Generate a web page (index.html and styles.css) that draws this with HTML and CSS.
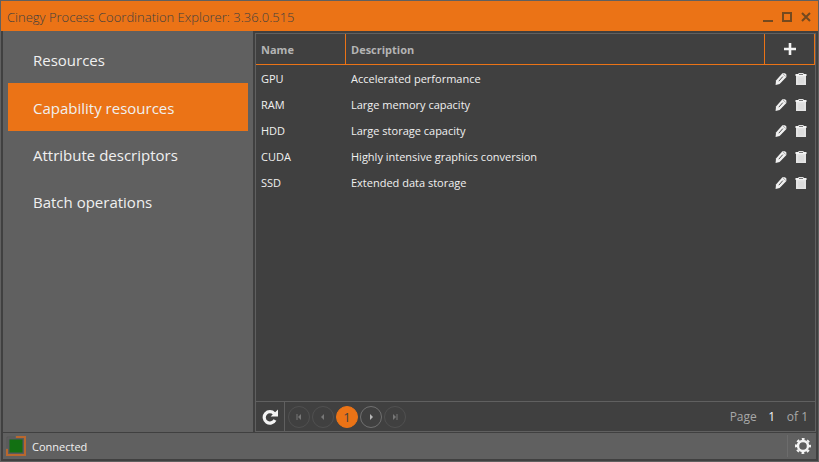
FILE: index.html
```html
<!DOCTYPE html>
<html lang="en">
<head>
    <meta charset="UTF-8">
    <meta name="viewport" content="width=device-width, initial-scale=1.0">
    <title>Cinegy Process Coordination Explorer</title>
    <link rel="stylesheet" href="styles.css">
</head>
<body>
    <svg class="sprite" aria-hidden="true">
        <symbol id="icon-edit" viewBox="0 0 12 14">
            <path d="M7.4 1.2 H10 L11.4 2.6 V5 L4.6 12 L0.6 13 L1 8.4 Z" fill="#f0f0f0"/>
            <path d="M7.8 4.6 L3.8 9.2" stroke="#505050" stroke-width="1"/>
            <path d="M8 1.8 L10.8 4.6" stroke="#808080" stroke-width="0.7"/>
        </symbol>
        <symbol id="icon-delete" viewBox="0 0 12 14">
            <path d="M3.5 1 H8.5 V2 H11.5 V4 H0.5 V2 H3.5 Z" fill="#f4f4f4"/>
            <path d="M4 2.4 H8" stroke="#404040" stroke-width="0.8"/>
            <path d="M1 4 H11 V13 H1 Z" fill="#e4e4e4"/>
            <path d="M4 5.5 V11.5 M6 5.5 V11.5 M8 5.5 V11.5" stroke="#d0d0d0" stroke-width="0.8"/>
        </symbol>
    </svg>

    <div class="window">
        <header class="titlebar">
            <h1>Cinegy Process Coordination Explorer: 3.36.0.515</h1>
            <div class="window-buttons">
                <button type="button" aria-label="Minimize">
                    <svg width="10" height="10" viewBox="0 0 10 10"><path d="M0 9 H10" stroke="#74491f" stroke-width="2"/></svg>
                </button>
                <button type="button" aria-label="Maximize">
                    <svg width="10" height="10" viewBox="0 0 10 10"><path d="M1 1 H9 V9 H1 Z" fill="none" stroke="#74491f" stroke-width="2"/></svg>
                </button>
                <button type="button" aria-label="Close">
                    <svg width="10" height="10" viewBox="0 0 10 10"><path d="M1 1 L9 9 M9 1 L1 9" stroke="#74491f" stroke-width="2"/></svg>
                </button>
            </div>
        </header>

        <div class="content">
            <nav class="sidebar">
                <a href="#resources">Resources</a>
                <a href="#capability" class="active">Capability resources</a>
                <a href="#attributes">Attribute descriptors</a>
                <a href="#batch">Batch operations</a>
            </nav>

            <main class="panel">
                <div class="table-area">
                    <table>
                        <thead>
                            <tr>
                                <th class="col-name">Name</th>
                                <th>Description</th>
                                <th class="col-actions">
                                    <button type="button" aria-label="Add">
                                        <svg width="12" height="12" viewBox="0 0 12 12"><path d="M6 0 V12 M0 6 H12" stroke="#f4f4f4" stroke-width="2.6"/></svg>
                                    </button>
                                </th>
                            </tr>
                        </thead>
                        <tbody>
                            <tr>
                                <td>GPU</td>
                                <td>Accelerated performance</td>
                                <td class="actions">
                                    <button type="button" aria-label="Edit GPU"><svg><use href="#icon-edit"/></svg></button>
                                    <button type="button" aria-label="Delete GPU"><svg><use href="#icon-delete"/></svg></button>
                                </td>
                            </tr>
                            <tr>
                                <td>RAM</td>
                                <td>Large memory capacity</td>
                                <td class="actions">
                                    <button type="button" aria-label="Edit RAM"><svg><use href="#icon-edit"/></svg></button>
                                    <button type="button" aria-label="Delete RAM"><svg><use href="#icon-delete"/></svg></button>
                                </td>
                            </tr>
                            <tr>
                                <td>HDD</td>
                                <td>Large storage capacity</td>
                                <td class="actions">
                                    <button type="button" aria-label="Edit HDD"><svg><use href="#icon-edit"/></svg></button>
                                    <button type="button" aria-label="Delete HDD"><svg><use href="#icon-delete"/></svg></button>
                                </td>
                            </tr>
                            <tr>
                                <td>CUDA</td>
                                <td>Highly intensive graphics conversion</td>
                                <td class="actions">
                                    <button type="button" aria-label="Edit CUDA"><svg><use href="#icon-edit"/></svg></button>
                                    <button type="button" aria-label="Delete CUDA"><svg><use href="#icon-delete"/></svg></button>
                                </td>
                            </tr>
                            <tr>
                                <td>SSD</td>
                                <td>Extended data storage</td>
                                <td class="actions">
                                    <button type="button" aria-label="Edit SSD"><svg><use href="#icon-edit"/></svg></button>
                                    <button type="button" aria-label="Delete SSD"><svg><use href="#icon-delete"/></svg></button>
                                </td>
                            </tr>
                        </tbody>
                    </table>
                </div>

                <div class="pager">
                    <button type="button" class="refresh" aria-label="Refresh">
                        <svg width="16" height="16" viewBox="0 0 16 16">
                            <path d="M12.2 4.6 A5.7 5.7 0 1 0 13 11" fill="none" stroke="#f4f4f4" stroke-width="3.2"/>
                            <path d="M16 0.6 V7.6 H8.6 Z" fill="#f4f4f4"/>
                        </svg>
                    </button>
                    <div class="pages">
                        <button type="button" class="page" aria-label="First page">
                            <svg width="8" height="8" viewBox="0 0 8 8"><path d="M2 1 V7" stroke="#777" stroke-width="1"/><path d="M6 1 V7 L3 4 Z" fill="#777"/></svg>
                        </button>
                        <button type="button" class="page" aria-label="Previous page">
                            <svg width="8" height="8" viewBox="0 0 8 8"><path d="M5 1 V7 L2 4 Z" fill="#777"/></svg>
                        </button>
                        <button type="button" class="page current">1</button>
                        <button type="button" class="page next" aria-label="Next page">
                            <svg width="8" height="8" viewBox="0 0 8 8"><path d="M3 1 V7 L6 4 Z" fill="#b8b8b8"/></svg>
                        </button>
                        <button type="button" class="page" aria-label="Last page">
                            <svg width="8" height="8" viewBox="0 0 8 8"><path d="M6 1 V7" stroke="#777" stroke-width="1"/><path d="M2 1 V7 L5 4 Z" fill="#777"/></svg>
                        </button>
                    </div>
                    <div class="page-info">
                        <label for="page-number">Page</label>
                        <input id="page-number" type="text" value="1">
                        <span>of 1</span>
                    </div>
                </div>
            </main>
        </div>

        <footer class="statusbar">
            <svg width="20" height="20" viewBox="0 0 20 20">
                <path d="M10 1 H19 V19 H1 V13" fill="none" stroke="#b8682e" stroke-width="2"/>
                <path d="M9 1 H1 V12" fill="none" stroke="#565656" stroke-width="1"/>
                <rect x="3" y="3" width="14" height="14" fill="#127012" stroke="#54545c" stroke-width="1"/>
            </svg>
            <span>Connected</span>
            <button type="button" class="settings" aria-label="Settings">
                <svg width="16" height="16" viewBox="0 0 16 16">
                    <circle cx="8" cy="8" r="5" fill="none" stroke="#f4f4f4" stroke-width="2.4"/>
                    <circle cx="8" cy="8" r="7" fill="none" stroke="#f4f4f4" stroke-width="2" stroke-dasharray="2.8 2.698" stroke-dashoffset="1.4"/>
                </svg>
            </button>
        </footer>
    </div>
</body>
</html>
```
FILE: styles.css
```css
* {
    box-sizing: border-box;
}
body {
    margin: 0;
    font-family: "Open Sans", "Noto Sans", sans-serif;
    font-size: 11px;
    color: #f0f0f0;
}
button {
    display: flex;
    align-items: center;
    justify-content: center;
    padding: 0;
    border: none;
    background: none;
    font: inherit;
    color: inherit;
    cursor: pointer;
}
.sprite {
    display: none;
}
.window {
    display: flex;
    flex-direction: column;
    min-height: 100vh;
    border: 1px solid #606060;
    background-color: #404040;
}

/* title bar */
.titlebar {
    display: flex;
    align-items: center;
    justify-content: space-between;
    height: 30px;
    padding: 2px 7px 0 6px;
    background-color: #eb7316;
}
.titlebar h1 {
    margin: 0;
    font-size: 13px;
    font-weight: 300;
    color: #404040;
}
.window-buttons {
    display: flex;
    gap: 9px;
}

.content {
    display: flex;
    flex: 1;
    gap: 2px;
    padding: 0 2px;
}

/* sidebar */
.sidebar {
    width: 250px;
    padding: 5px;
    background-color: #606060;
}
.sidebar a {
    display: block;
    padding: 2px 25px 0;
    font-size: 15px;
    line-height: 45px;
    color: #f0f0f0;
    text-decoration: none;
}
.sidebar a.active {
    line-height: 46px;
    background-color: #eb7316;
}

/* table */
.panel {
    display: flex;
    flex: 1;
    flex-direction: column;
    margin-top: 2px;
    border: 1px solid #606060;
}
.table-area {
    flex: 1;
}
table {
    width: 100%;
    border-collapse: separate;
    border-spacing: 0;
}
th, td {
    padding: 0 5px;
    text-align: left;
}
th {
    height: 31px;
    border-right: 1px solid #eb7316;
    border-bottom: 1px solid #eb7316;
    color: #b4b4b4;
}
td {
    height: 26px;
}
.col-name {
    width: 90px;
}
.col-actions {
    width: 50px;
}
.col-actions button {
    width: 100%;
}
.actions button {
    display: inline-flex;
    width: 12px;
    height: 14px;
    margin-left: 5px;
    vertical-align: middle;
}
.actions svg {
    width: 12px;
    height: 14px;
}
.actions {
    white-space: nowrap;
}

/* pager */
.pager {
    display: flex;
    height: 30px;
    border-top: 1px solid #606060;
}
.refresh {
    width: 29px;
    border-right: 1px solid #606060;
}
.pages {
    display: flex;
    align-items: center;
    gap: 2px;
    padding: 0 3px;
}
.page {
    width: 22px;
    height: 22px;
    border: 1px solid #505050;
    border-radius: 50%;
}
.page.next {
    border-color: #707070;
}
.page.current {
    border-color: #eb7316;
    background-color: #eb7316;
    font-size: 13px;
    color: #404040;
}
.page-info {
    display: flex;
    align-items: center;
    margin-left: auto;
    padding-right: 7px;
    font-size: 12px;
    color: #a8a8a8;
}
.page-info input {
    width: 30px;
    padding: 0;
    border: none;
    background: none;
    font: inherit;
    text-align: center;
    color: #f4f4f4;
}

/* status bar */
.statusbar {
    display: flex;
    align-items: center;
    gap: 6px;
    height: 26px;
    margin: 1px 2px 2px;
    padding: 0 4px 0 3px;
    background-color: #606060;
}
.settings {
    width: 25px;
    height: 22px;
    margin-left: auto;
    padding-left: 6px;
    border-left: 1px solid #6c6c6c;
}
```
